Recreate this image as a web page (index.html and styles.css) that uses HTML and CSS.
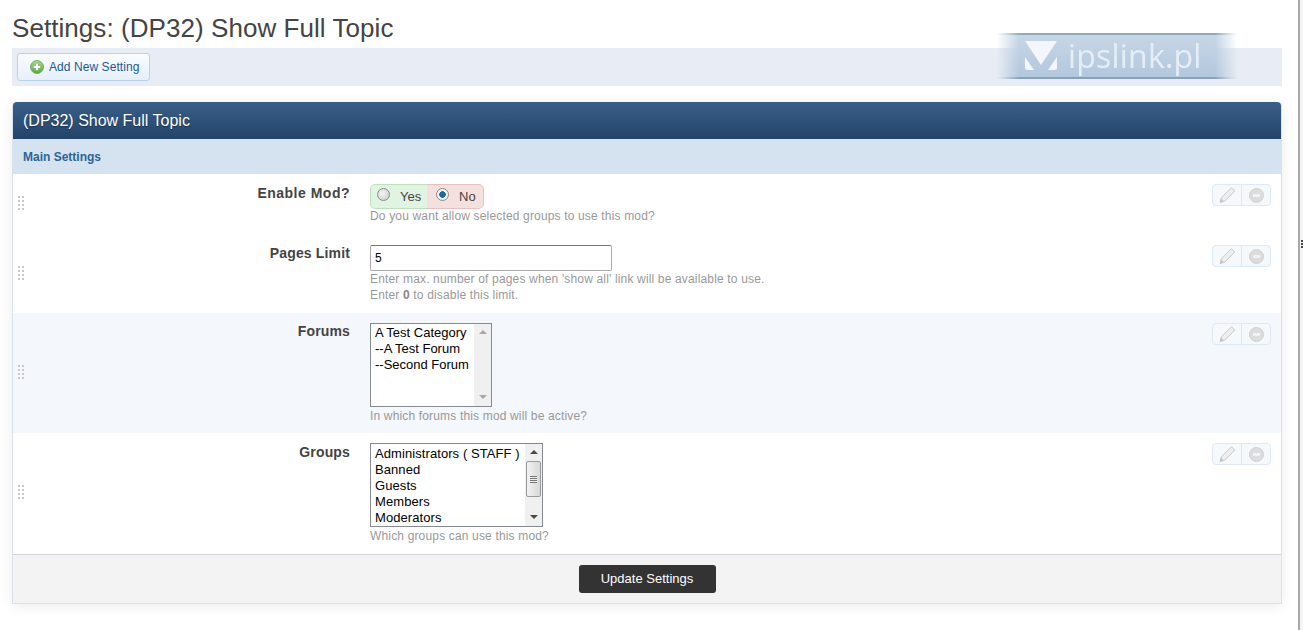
FILE: index.html
```html
<!DOCTYPE html>
<html lang="en">
<head>
<meta charset="utf-8">
<title>Settings: (DP32) Show Full Topic</title>
<link rel="stylesheet" href="styles.css">
</head>
<body>
<div class="page">
  <h1 class="page-title">Settings: (DP32) Show Full Topic</h1>
  <div class="toolbar">
    <a class="add-btn" href="#">
      <svg class="add-icon" viewBox="0 0 14 14" width="14" height="14">
        <defs><linearGradient id="g" x1="0" y1="0" x2="0" y2="1"><stop offset="0" stop-color="#a6d98c"/><stop offset="1" stop-color="#5aa83f"/></linearGradient></defs>
        <circle cx="7" cy="7" r="6.5" fill="url(#g)" stroke="#6aa255" stroke-width="0.8"/>
        <path d="M7 3.8v6.4M3.8 7h6.4" stroke="#fff" stroke-width="2"/>
      </svg>
      Add New Setting
    </a>
  </div>
  <section class="panel">
    <h2 class="panel-head">(DP32) Show Full Topic</h2>
    <h3 class="panel-sub">Main Settings</h3>

    <div class="row row-1">
      <div class="grip"></div>
      <div class="label">Enable Mod?</div>
      <div class="control">
        <div class="yesno">
          <label class="yes"><span class="radio"></span>Yes</label>
          <label class="no"><span class="radio checked"></span>No</label>
        </div>
        <p class="desc desc-yn">Do you want allow selected groups to use this mod?</p>
      </div>
      <div class="actions"><span class="act"><svg viewBox="0 0 18 18" width="18" height="18"><path d="M2 16.5l1.2-4.5L13.5 1.7l3.3 3.3L6.5 15.3z" fill="#eeeeee" stroke="#c9c9c9"/><path d="M2.2 16.2l.9-3.6 2.9 2.9z" fill="#c4c4c4"/></svg></span><span class="act"><span class="minus"></span></span></div>
    </div>

    <div class="row row-2">
      <div class="grip"></div>
      <div class="label">Pages Limit</div>
      <div class="control">
        <div class="textbox">5</div>
        <p class="desc desc-tb">Enter max. number of pages when 'show all' link will be available to use.<br>Enter <b>0</b> to disable this limit.</p>
      </div>
      <div class="actions"><span class="act"><svg viewBox="0 0 18 18" width="18" height="18"><path d="M2 16.5l1.2-4.5L13.5 1.7l3.3 3.3L6.5 15.3z" fill="#eeeeee" stroke="#c9c9c9"/><path d="M2.2 16.2l.9-3.6 2.9 2.9z" fill="#c4c4c4"/></svg></span><span class="act"><span class="minus"></span></span></div>
    </div>

    <div class="row row-3 alt">
      <div class="grip"></div>
      <div class="label">Forums</div>
      <div class="control">
        <div class="listbox lb-forums">
          <div class="options"><div>A Test Category</div><div>--A Test Forum</div><div>--Second Forum</div></div>
          <div class="sb sb-off"><span class="up"></span><span class="track"></span><span class="down"></span></div>
        </div>
        <p class="desc desc-lb">In which forums this mod will be active?</p>
      </div>
      <div class="actions"><span class="act"><svg viewBox="0 0 18 18" width="18" height="18"><path d="M2 16.5l1.2-4.5L13.5 1.7l3.3 3.3L6.5 15.3z" fill="#eeeeee" stroke="#c9c9c9"/><path d="M2.2 16.2l.9-3.6 2.9 2.9z" fill="#c4c4c4"/></svg></span><span class="act"><span class="minus"></span></span></div>
    </div>

    <div class="row row-4">
      <div class="grip"></div>
      <div class="label">Groups</div>
      <div class="control">
        <div class="listbox lb-groups">
          <div class="options"><div>Administrators ( STAFF )</div><div>Banned</div><div>Guests</div><div>Members</div><div>Moderators</div></div>
          <div class="sb"><span class="up"></span><span class="track"><span class="thumb"></span></span><span class="down"></span></div>
        </div>
        <p class="desc desc-lb">Which groups can use this mod?</p>
      </div>
      <div class="actions"><span class="act"><svg viewBox="0 0 18 18" width="18" height="18"><path d="M2 16.5l1.2-4.5L13.5 1.7l3.3 3.3L6.5 15.3z" fill="#eeeeee" stroke="#c9c9c9"/><path d="M2.2 16.2l.9-3.6 2.9 2.9z" fill="#c4c4c4"/></svg></span><span class="act"><span class="minus"></span></span></div>
    </div>

    <div class="panel-foot"><button class="save" type="button">Update Settings</button></div>
  </section>
</div>

<div class="wm">
  <svg class="wm-mark" viewBox="0 0 32 30" width="32" height="30">
    <path d="M0 0H32L16 24z" fill="#f3f7fb"/>
    <path d="M0 16l9 13H2q-2 0-2-2zM32 16l-9 13h7q2 0 2-2z" fill="#f3f7fb"/>
  </svg>
  <span class="wm-text">ipslink.pl</span>
</div>
<div class="edge"><span class="edge-dots"></span></div>
</body>
</html>
```
FILE: styles.css
```css
* { box-sizing: border-box; }
html, body { margin: 0; height: 630px; overflow: hidden; background: #fff; }
body { font-family: "Liberation Sans", Arial, sans-serif; position: relative; }

.page { padding: 0 21px 0 12px; }

.page-title {
  margin: 0;
  height: 48px;
  padding-top: 13px;
  font-size: 26px;
  letter-spacing: .06px;
  line-height: 30px;
  font-weight: 400;
  color: #444;
}

.toolbar {
  height: 38px;
  padding: 5px;
  background: #e8ecf4;
}
.add-btn {
  display: inline-flex;
  align-items: center;
  gap: 5px;
  width: 133px;
  height: 28px;
  padding-left: 12px;
  border: 1px solid #b3d3ee;
  border-radius: 3px;
  background: linear-gradient(#fafcfe, #e6f0f9);
  color: #1d5a96;
  font-size: 12px;
  letter-spacing: .07px;
  text-decoration: none;
}
.add-icon { flex: none; }

.panel {
  margin-top: 16px;
  height: 502px;
  border: 1px solid #d6e2ee;
  border-top: 0;
  border-radius: 4px 4px 0 0;
  box-shadow: 0 2px 14px rgba(0,0,0,.08);
  display: flex;
  flex-direction: column;
}
.panel-head {
  margin: 0;
  height: 37px;
  padding-left: 10px;
  background: linear-gradient(#3a5f87, #234469);
  border-radius: 4px 4px 0 0;
  color: #fff;
  font-size: 16px;
  font-weight: 400;
  line-height: 37px;
  text-shadow: 0 1px 1px rgba(0,0,0,.4);
}
.panel-sub {
  margin: 0;
  height: 35px;
  padding-left: 10px;
  background: #d5e2f0;
  color: #2c6496;
  font-size: 12px;
  font-weight: 700;
  line-height: 36px;
}

.row { display: flex; position: relative; }
.row-1 { height: 61px; }
.row-2 { height: 78px; }
.row-3 { height: 120px; }
.row-4 { height: 121px; }
.alt { background: #f4f7fb; }

.grip {
  position: absolute;
  left: 5px;
  top: 50%;
  margin-top: -8px;
  width: 6px;
  height: 14px;
  background-image: linear-gradient(#c8c8c8 2px, transparent 2px), linear-gradient(#c8c8c8 2px, transparent 2px);
  background-size: 2px 4px;
  background-position: 0 0, 4px 0;
  background-repeat: repeat-y;
}
.row-1 .grip, .row-4 .grip { margin-top: -9px; }

.label {
  width: 337px;
  flex: none;
  padding-top: 10px;
  text-align: right;
  color: #444;
  font-size: 14px;
  letter-spacing: .15px;
  line-height: 16px;
  font-weight: 700;
}
.row-1 .label { padding-top: 11px; letter-spacing: .5px; }
.row-4 .label { padding-top: 11px; }

.control { margin-left: 20px; padding-top: 10px; flex: none; }

.desc { margin: 0; color: #999; font-size: 12px; letter-spacing: .16px; line-height: 16px; }
.desc b { color: #888; }
.desc-yn { margin-top: -1px; }
.desc-tb { margin-top: 0; }
.desc-lb { margin-top: 1px; }

.yesno {
  display: flex;
  width: 114px;
  height: 25px;
  border-radius: 5px;
  overflow: hidden;
  font-size: 13px;
  color: #444;
}
.yesno label { display: flex; align-items: center; height: 25px; }
.yes {
  width: 57px;
  padding-left: 6px;
  background: #e1f3e1;
  border: 1px solid #bfe0bf;
  border-right: 0;
  border-radius: 5px 0 0 5px;
  gap: 10px;
}
.no {
  width: 57px;
  padding-left: 9px;
  background: #f5e0e0;
  border: 1px solid #e8c0c0;
  border-left: 0;
  border-radius: 0 5px 5px 0;
  gap: 10px;
}
.radio {
  width: 13px;
  height: 13px;
  margin-top: -4px;
  border-radius: 50%;
  border: 1px solid #8a8a8a;
  background: radial-gradient(circle at 40% 40%, #f4f4f4, #c8c8c8);
  flex: none;
}
.radio.checked { background: radial-gradient(circle, #1a6aa0 0 3px, #f2f2f2 3.5px); }

.textbox {
  width: 242px;
  height: 26px;
  padding: 0 4px;
  border: 1px solid #aaa;
  border-top-color: #777;
  border-radius: 2px;
  background: #fff;
  color: #000;
  font-size: 12px;
  line-height: 25px;
}

.listbox {
  display: flex;
  height: 84px;
  border: 1px solid #868a91;
  background: #fff;
  color: #000;
  font-size: 13px;
  line-height: 16px;
}
.lb-forums { width: 122px; }
.lb-groups { width: 173px; }
.options { flex: 1; padding: 1px 4px; white-space: nowrap; overflow: hidden; }
.lb-groups .options { padding-top: 2px; letter-spacing: .08px; }

.sb { width: 17px; flex: none; display: flex; flex-direction: column; background: #f0f0f0; }
.sb .up, .sb .down { height: 17px; position: relative; flex: none; }
.sb .track { flex: 1; }
.sb .up::after, .sb .down::after {
  content: "";
  position: absolute;
  left: 5px;
  top: 6px;
  border-left: 4px solid transparent;
  border-right: 4px solid transparent;
}
.sb .up::after { border-bottom: 4px solid #4a4a4a; }
.sb .down::after { border-top: 4px solid #4a4a4a; }
.sb-off .up::after { border-bottom-color: #a8a8a8; }
.sb-off .down::after { border-top-color: #a8a8a8; }
.thumb {
  display: block;
  height: 36px;
  margin: 0 1px;
  border: 1px solid #9a9a9a;
  border-radius: 2px;
  background-image:
    repeating-linear-gradient(#777 0 1px, #eee 1px 2px),
    linear-gradient(90deg, #f2f2f2, #d8d8d8);
  background-size: 7px 7px, 100% 100%;
  background-position: center, 0 0;
  background-repeat: no-repeat;
}

.actions {
  margin-left: auto;
  margin-right: 10px;
  margin-top: 10px;
  flex: none;
  display: flex;
  width: 59px;
  height: 22px;
  border: 1px solid #dde9f4;
  border-radius: 4px;
  background: #f6f9fb;
  overflow: hidden;
}
.act { flex: 1; display: flex; align-items: center; justify-content: center; }
.act + .act { border-left: 1px solid #dde9f4; }
.minus {
  position: relative;
  width: 15px;
  height: 15px;
  border-radius: 50%;
  background: #dcdcdc;
  border: 1px solid #d0d0d0;
}
.minus::after {
  content: "";
  position: absolute;
  left: 3px;
  right: 3px;
  top: 5px;
  height: 3px;
  background: #f2f2f2;
}

.panel-foot {
  flex: 1;
  display: flex;
  align-items: flex-start;
  justify-content: center;
  padding-top: 10px;
  background: #f3f3f3;
  border-top: 1px solid #d2d6da;
}
.save {
  width: 137px;
  height: 28px;
  padding: 0 0 2px;
  border: 0;
  border-radius: 3px;
  background: #333;
  color: #fff;
  font-family: inherit;
  font-size: 13px;
}

.wm {
  position: absolute;
  left: 997px;
  top: 33px;
  width: 240px;
  height: 46px;
  display: flex;
  align-items: center;
  padding-left: 28px;
  gap: 11px;
  background: linear-gradient(#c6d6e6, #b3c7dd);
  border-top: 2px solid #93a9c0;
  border-bottom: 2px solid #8aa1bb;
  -webkit-mask-image: linear-gradient(90deg, transparent, #000 22px, #000 218px, transparent);
  mask-image: linear-gradient(90deg, transparent, #000 22px, #000 218px, transparent);
}
.wm-mark { flex: none; }
.wm-text { color: #e6eef5; font-size: 32px; letter-spacing: .2px; line-height: 42px; font-family: "Open Sans", sans-serif; }

.edge {
  position: absolute;
  left: 1298px;
  top: 0;
  bottom: 0;
  width: 5px;
  border-left: 2px solid #a8a8a8;
  background: #f4f4f4;
}
.edge-dots {
  position: absolute;
  left: 1px;
  top: 240px;
  width: 2px;
  height: 8px;
  background: repeating-linear-gradient(#444 0 2px, transparent 2px 3px);
}
```
